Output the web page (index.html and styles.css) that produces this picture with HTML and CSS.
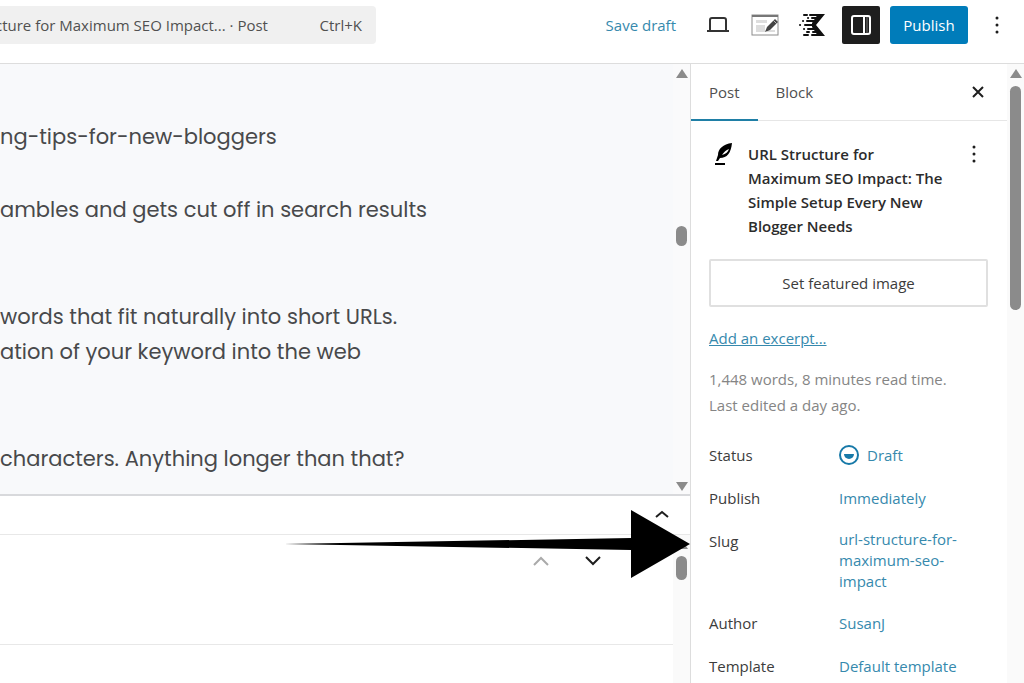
FILE: index.html
```html
<!DOCTYPE html>
<html lang="en">
<head>
  <meta charset="UTF-8">
  <meta name="viewport" content="width=device-width, initial-scale=1.0">
  <title>Edit Post</title>
  <link rel="stylesheet" href="styles.css">
</head>
<body>
  <div class="editor">
    <header class="topbar">
      <button class="command-bar" type="button">
        <span class="command-title">cture for Maximum SEO Impact... · Post</span>
        <span class="command-key">Ctrl+K</span>
      </button>

      <div class="actions">
        <button class="save-draft" type="button">Save draft</button>
        <button class="icon-btn laptop" type="button" aria-label="View">
          <svg width="24" height="24" viewBox="0 0 24 24" fill="none" stroke="#333" stroke-width="2">
            <path d="M4 17V7q0-2 2-2h12q2 0 2 2v10"/>
            <path d="M1 18h22"/>
          </svg>
        </button>
        <button class="icon-btn" type="button" aria-label="Edit layout">
          <svg width="30" height="24" viewBox="0 0 30 24">
            <rect x="2" y="2" width="26" height="20" fill="#fff" stroke="#8c8c8c"/>
            <path d="M2 3h26" stroke="#777" stroke-width="2"/>
            <path d="M6 7h11v3H6zM6 12h9v7H6zM17 17h8v2h-8z" fill="#ddd"/>
            <path d="M15 19l2-5 8-8 3 3-8 8z" fill="#444"/>
            <path d="M23 7l4 4" stroke="#bbb"/>
          </svg>
        </button>
        <button class="icon-btn" type="button" aria-label="Kadence settings">
          <svg width="28" height="24" viewBox="0 0 28 24" fill="#111">
            <path d="M20 1h7l-9 11 9 11h-7l-6-9v-4z"/>
            <g stroke="#111" stroke-width="2" stroke-linecap="round">
              <path d="M6 2h3M12 2h10M10 5h.1M14 5h5M5 8h.1M9 8h8M7 12h9M2 12h.1M6 16h.1M10 16h8M9 19h2M15 19h5M6 22h4M14 22h8"/>
            </g>
          </svg>
        </button>
        <button class="icon-btn toggle" type="button" aria-label="Settings" aria-pressed="true">
          <svg width="22" height="22" viewBox="0 0 22 22" fill="none" stroke="#fff" stroke-width="2">
            <rect x="2" y="2" width="18" height="18" rx="2"/>
            <path d="M14 2v18"/>
            <path d="M17 3v16" stroke="#777" stroke-width="1"/>
          </svg>
        </button>
        <button class="publish" type="button">Publish</button>
        <button class="icon-btn dots" type="button" aria-label="Options">
          <svg width="6" height="20" viewBox="0 0 6 20" fill="#1e1e1e">
            <circle cx="3" cy="3" r="1.5"/><circle cx="3" cy="10" r="1.5"/><circle cx="3" cy="17" r="1.5"/>
          </svg>
        </button>
      </div>
    </header>

    <main class="content">
      <section class="canvas">
        <div class="post-text">
          <p>ng-tips-for-new-bloggers</p>
          <p>ambles and gets cut off in search results</p>
          <p class="spaced">words that fit naturally into short URLs.<br>ation of your keyword into the web</p>
          <p class="spaced">characters. Anything longer than that?</p>
        </div>
        <div class="scrollbar">
          <span class="arrow-up"></span>
          <span class="thumb canvas-thumb"></span>
          <span class="arrow-down"></span>
        </div>
      </section>

      <section class="metaboxes">
        <div class="metabox-bar">
          <button class="icon-btn" type="button" aria-label="Collapse meta boxes">
            <svg width="16" height="10" viewBox="0 0 16 10" fill="none" stroke="#1e1e1e" stroke-width="2"><path d="M2 8l6-5 6 5"/></svg>
          </button>
        </div>
        <div class="metabox-body">
          <div class="metabox">
            <button class="icon-btn" type="button" aria-label="Move up" disabled>
              <svg width="18" height="12" viewBox="0 0 18 12" fill="none" stroke="#aaa" stroke-width="2"><path d="M2 10l7-7 7 7"/></svg>
            </button>
            <button class="icon-btn" type="button" aria-label="Move down">
              <svg width="18" height="12" viewBox="0 0 18 12" fill="none" stroke="#1e1e1e" stroke-width="2"><path d="M2 2l7 7 7-7"/></svg>
            </button>
          </div>
          <div class="scrollbar">
            <span class="arrow-up"></span>
            <span class="thumb metabox-thumb"></span>
          </div>
        </div>
        <!-- pointer to the slug row -->
        <svg class="pointer" width="406" height="68" viewBox="0 0 406 68"><path d="M0 34L347 28V0L406 34 347 68V40z"/></svg>
      </section>
    </main>

    <aside class="sidebar">
      <div class="panel">
        <div class="tabs" role="tablist">
          <button class="tab active" type="button" role="tab" aria-selected="true">Post</button>
          <button class="tab" type="button" role="tab" aria-selected="false">Block</button>
          <button class="icon-btn close" type="button" aria-label="Close settings">
            <svg width="14" height="14" viewBox="0 0 14 14" stroke="#1e1e1e" stroke-width="2"><path d="M2 2l10 10M12 2L2 12"/></svg>
          </button>
        </div>

        <div class="summary">
          <div class="post-card">
            <svg class="post-icon" width="20" height="24" viewBox="0 0 20 24">
              <path d="M18 1C9 2 4 7 4 13l-2 6h2l2-3c7 0 11-5 12-15z"/>
              <path d="M8 13c2-3 4-5 7-6-1 3-3 5-7 6z" fill="#fff"/>
              <path d="M1 22h10" stroke="#000" stroke-width="2"/>
            </svg>
            <h2>URL Structure for<br>Maximum SEO Impact: The<br>Simple Setup Every New<br>Blogger Needs</h2>
            <button class="icon-btn" type="button" aria-label="Actions">
              <svg width="6" height="20" viewBox="0 0 6 20" fill="#1e1e1e">
                <circle cx="3" cy="3" r="1.5"/><circle cx="3" cy="10" r="1.5"/><circle cx="3" cy="17" r="1.5"/>
              </svg>
            </button>
          </div>

          <button class="featured" type="button">Set featured image</button>
          <a class="excerpt" href="#">Add an excerpt...</a>
          <p class="stats">1,448 words, 8 minutes read time.<br>Last edited a day ago.</p>

          <dl class="rows">
            <div class="row">
              <dt>Status</dt>
              <dd>
                <button type="button">
                  <svg width="20" height="20" viewBox="0 0 20 20"><circle cx="10" cy="10" r="9" fill="none" stroke="#1779a8" stroke-width="2"/><path d="M5 9h10a5 5 0 0 1-10 0z" fill="#1779a8"/></svg>
                  Draft
                </button>
              </dd>
            </div>
            <div class="row">
              <dt>Publish</dt>
              <dd><button type="button">Immediately</button></dd>
            </div>
            <div class="row">
              <dt>Slug</dt>
              <dd><button type="button">url-structure-for-<br>maximum-seo-<br>impact</button></dd>
            </div>
            <div class="row">
              <dt>Author</dt>
              <dd><button type="button">SusanJ</button></dd>
            </div>
            <div class="row">
              <dt>Template</dt>
              <dd><button type="button">Default template</button></dd>
            </div>
          </dl>
        </div>
      </div>
      <div class="scrollbar">
        <span class="arrow-up"></span>
        <span class="thumb sidebar-thumb"></span>
      </div>
    </aside>
  </div>
</body>
</html>
```
FILE: styles.css
```css
* {
  box-sizing: border-box;
  margin: 0;
  padding: 0;
}

body {
  background: #fff;
  color: #3c3c3c;
  font-family: "Open Sans", "Noto Sans", sans-serif;
  font-size: 15px;
}

button {
  border: none;
  background: none;
  color: inherit;
  font: inherit;
  cursor: pointer;
}

svg {
  display: block;
  flex-shrink: 0;
}

.editor {
  display: grid;
  grid-template-columns: minmax(0, 1fr) 334px;
  grid-template-rows: 64px minmax(0, 1fr);
  height: 100vh;
  overflow: hidden;
}

/* top bar */
.topbar {
  grid-column: 1 / 3;
  display: flex;
  justify-content: space-between;
  align-items: flex-start;
  padding: 6px 16px 0 0;
  border-bottom: 1px solid #ddd;
}

.command-bar {
  display: flex;
  justify-content: space-between;
  align-items: center;
  width: 376px;
  height: 38px;
  padding: 0 14px 0 0;
  border-radius: 0 4px 4px 0;
  background: #f0f0f0;
  color: #505050;
  white-space: nowrap;
}

.command-title {
  margin-left: -5px;
}

.actions {
  display: flex;
  align-items: center;
  height: 38px;
}

.save-draft {
  margin-right: 30px;
  color: #3689ad;
}

.icon-btn {
  display: flex;
  align-items: center;
  justify-content: center;
}

.actions .icon-btn {
  margin-right: 18px;
}

.actions .laptop {
  margin-right: 20px;
}

.actions .toggle {
  width: 38px;
  height: 38px;
  margin-right: 10px;
  margin-left: -2px;
  border-radius: 2px;
  background: #1e1e1e;
}

.publish {
  width: 78px;
  height: 38px;
  margin-right: 26px;
  border-radius: 3px;
  background: #007cba;
  color: #fff;
  font-weight: 500;
}

.actions .dots {
  margin-right: 8px;
}

/* scrollbars */
.scrollbar {
  display: flex;
  flex-direction: column;
  align-items: center;
  flex-shrink: 0;
  width: 17px;
  padding: 5px 0 3px;
  background: #fafafa;
}

.arrow-up,
.arrow-down {
  border: 6px solid transparent;
}

.arrow-up {
  border-top: none;
  border-bottom: 9px solid #8b8b8b;
}

.arrow-down {
  margin-top: auto;
  border-bottom: none;
  border-top: 9px solid #8b8b8b;
}

.thumb {
  width: 11px;
  border-radius: 6px;
  background: #8b8b8b;
}

.canvas-thumb {
  height: 20px;
  margin-top: 148px;
}

.metabox-thumb {
  height: 24px;
  margin-top: 7px;
}

.sidebar-thumb {
  height: 224px;
  margin-top: 8px;
}

/* post canvas */
.content {
  display: flex;
  flex-direction: column;
  min-height: 0;
}

.canvas {
  display: flex;
  flex: 1;
  min-height: 0;
  background: #f8f9fb;
}

.canvas .scrollbar {
  background: #fafafb;
}

.post-text {
  flex: 1;
  min-width: 0;
  padding-top: 55px;
  color: #48494b;
  font-family: Poppins, Inter, sans-serif;
  font-size: 21px;
  line-height: 35px;
  white-space: nowrap;
}

.post-text p {
  margin-bottom: 38px;
}

.post-text .spaced {
  margin-top: 72px;
}

/* meta boxes */
.metaboxes {
  position: relative;
  display: flex;
  flex-direction: column;
  height: 189px;
  border-top: 2px solid #d8d9dc;
}

.metabox-bar {
  display: flex;
  justify-content: flex-end;
  height: 39px;
  padding: 0 20px 3px 0;
  border-bottom: 1px solid #e8e8e8;
}

.metabox-body {
  display: flex;
  flex: 1;
}

.metabox {
  display: flex;
  justify-content: flex-end;
  align-items: flex-start;
  gap: 34px;
  flex: 1;
  height: 110px;
  padding: 20px 71px 0 0;
  border-bottom: 1px solid #e8e8e8;
}

.pointer {
  position: absolute;
  right: 0;
  top: 14px;
  z-index: 1;
}

/* settings sidebar */
.sidebar {
  display: flex;
  min-height: 0;
  border-left: 1px solid #ddd;
}

.panel {
  flex: 1;
  min-width: 0;
}

.tabs {
  display: flex;
  height: 57px;
  padding-right: 22px;
  border-bottom: 1px solid #e6e6e6;
}

.tab {
  padding: 0 18px;
  color: #505050;
}

.tab.active {
  margin-bottom: -1px;
  border-bottom: 2px solid #1f7fa6;
}

.close {
  margin-left: auto;
}

.summary {
  padding: 21px 19px 0 18px;
}

.post-card {
  display: flex;
  align-items: flex-start;
  margin-bottom: 21px;
}

.post-icon {
  margin: 0 14px 0 5px;
}

.post-card h2 {
  flex: 1;
  color: #2c2c2c;
  font-size: 15px;
  font-weight: 600;
  line-height: 24px;
}

.post-card .icon-btn {
  width: 28px;
  height: 24px;
}

.featured {
  display: block;
  width: 100%;
  height: 48px;
  border: 2px solid #e0e0e0;
  border-radius: 2px;
}

.excerpt {
  display: inline-block;
  margin-top: 21px;
  color: #3689ad;
  line-height: 21px;
}

.stats {
  margin-top: 17px;
  color: #858585;
  line-height: 26px;
}

.rows {
  display: flex;
  flex-direction: column;
  gap: 11px;
  margin-top: 21px;
}

.row {
  display: grid;
  grid-template-columns: 130px minmax(0, 1fr);
  min-height: 32px;
}

.row dt {
  line-height: 32px;
}

.row button {
  display: flex;
  align-items: center;
  gap: 8px;
  min-height: 32px;
  padding: 4px 0;
  color: #3689ad;
  line-height: 21px;
  text-align: left;
}
```
